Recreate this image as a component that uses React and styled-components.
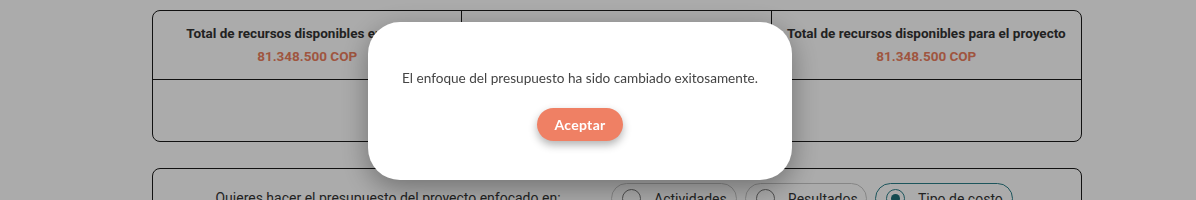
import React from "react";
import styled, { createGlobalStyle } from "styled-components";

const GlobalStyle = createGlobalStyle`
  * { box-sizing: border-box; }
  body {
    margin: 0;
    background: #ffffff;
    font-family: Roboto, "Liberation Sans", sans-serif;
  }
`;

const Page = styled.div`
  padding: 10px 114px 0 152px;
  width: 1196px;
  height: 200px;
  overflow: hidden;
`;

const SummaryCard = styled.div`
  width: 930px;
  border: 1px solid #1a1a1a;
  border-radius: 8px;
  display: grid;
  grid-template-columns: repeat(3, 1fr);
  grid-template-rows: 69px 61px;
  overflow: hidden;
`;

const Cell = styled.div`
  display: flex;
  flex-direction: column;
  align-items: center;
  justify-content: flex-start;
  padding-top: 14px;
  gap: 7px;
  border-right: ${(p) => (p.$last ? "none" : "1px solid #1a1a1a")};
  border-bottom: ${(p) => (p.$bottom ? "none" : "1px solid #1a1a1a")};
`;

const CellTitle = styled.div`
  font-size: 13.5px;
  font-weight: 700;
  color: #333333;
  white-space: nowrap;
`;

const CellValue = styled.div`
  font-size: 13.5px;
  font-weight: 700;
  color: #ee7f5e;
`;

const FocusCard = styled.div`
  margin-top: 26px;
  width: 930px;
  height: 60px;
  border: 1px solid #1a1a1a;
  border-radius: 8px;
  display: flex;
  align-items: flex-start;
  padding-top: 14px;
`;

const FocusLabel = styled.div`
  width: 458px;
  padding: 7px 0 0 12px;
  text-align: center;
  font-size: 14px;
  color: #333333;
`;

const RadioGroup = styled.div`
  display: flex;
  gap: 8px;
`;

const RadioPill = styled.label`
  height: 31px;
  display: flex;
  align-items: center;
  gap: 13px;
  padding: 0 10px 0 10px;
  border: 1px solid ${(p) => (p.$checked ? "#2b7f8a" : "#c8c8c8")};
  border-radius: 16px;
  font-size: 14px;
  color: #333333;
  white-space: nowrap;
  width: ${(p) => p.$w}px;
`;

const RadioDot = styled.span`
  flex: none;
  width: 19px;
  height: 19px;
  border-radius: 50%;
  border: 1.5px solid ${(p) => (p.$checked ? "#2b7f8a" : "#777777")};
  display: flex;
  align-items: center;
  justify-content: center;

  &::after {
    content: "";
    display: ${(p) => (p.$checked ? "block" : "none")};
    width: 9px;
    height: 9px;
    border-radius: 50%;
    background: #1d6f78;
  }
`;

const Backdrop = styled.div`
  position: fixed;
  inset: 0;
  background: rgba(0, 0, 0, 0.33);
`;

const Modal = styled.div`
  position: fixed;
  left: 368px;
  top: 22px;
  width: 424px;
  height: 158px;
  background: #ffffff;
  border-radius: 32px;
  box-shadow: 0 8px 28px rgba(0, 0, 0, 0.35);
  display: flex;
  flex-direction: column;
  align-items: center;
  padding-top: 48px;
  font-family: Lato, "Open Sans", sans-serif;
`;

const Message = styled.p`
  margin: 0;
  font-size: 13.6px;
  color: #444444;
`;

const AcceptButton = styled.button`
  margin-top: 22px;
  width: 86px;
  height: 33px;
  border: none;
  border-radius: 17px;
  background: #ef8064;
  color: #ffffff;
  font-family: Lato, "Open Sans", sans-serif;
  font-size: 14px;
  font-weight: 700;
  letter-spacing: 0.3px;
  box-shadow: 0 4px 8px rgba(0, 0, 0, 0.3);
  cursor: pointer;
`;

const summary = [
  { title: "Total de recursos disponibles en fondos", value: "81.348.500 COP" },
  { title: "Total de recursos asignados al presupuesto", value: "81.348.500 COP" },
  { title: "Total de recursos disponibles para el proyecto", value: "81.348.500 COP" },
];

const options = [
  { label: "Actividades", w: 126 },
  { label: "Resultados", w: 122 },
  { label: "Tipo de costo", w: 138, checked: true },
];

export default function App() {
  return (
    <>
      <GlobalStyle />
      <Page>
        <SummaryCard>
          {summary.map((s, i) => (
            <Cell key={i} $last={i === 2}>
              <CellTitle>{s.title}</CellTitle>
              <CellValue>{s.value}</CellValue>
            </Cell>
          ))}
          {summary.map((s, i) => (
            <Cell key={"b" + i} $last={i === 2} $bottom />
          ))}
        </SummaryCard>
        <FocusCard>
          <FocusLabel>Quieres hacer el presupuesto del proyecto enfocado en:</FocusLabel>
          <RadioGroup>
            {options.map((o) => (
              <RadioPill key={o.label} $checked={o.checked} $w={o.w}>
                <RadioDot $checked={o.checked} />
                {o.label}
              </RadioPill>
            ))}
          </RadioGroup>
        </FocusCard>
      </Page>
      <Backdrop />
      <Modal>
        <Message>El enfoque del presupuesto ha sido cambiado exitosamente.</Message>
        <AcceptButton>Aceptar</AcceptButton>
      </Modal>
    </>
  );
}
